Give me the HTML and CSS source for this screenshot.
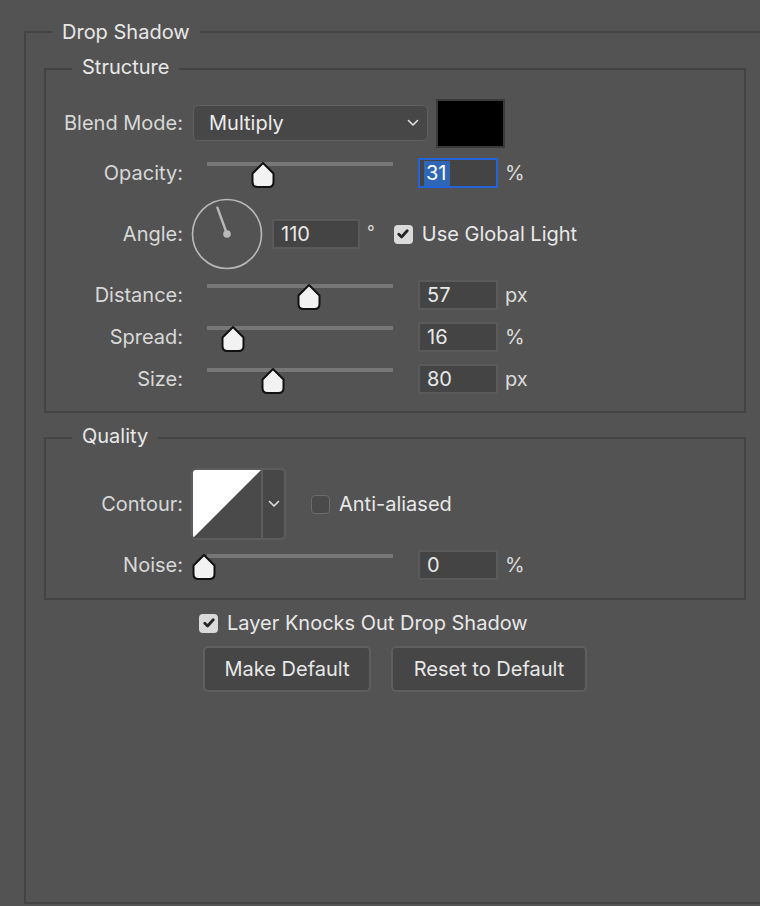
FILE: index.html
```html
<!DOCTYPE html>
<html>
<head>
<meta charset="utf-8">
<link rel="stylesheet" href="styles.css">
</head>
<body>
<fieldset class="outer">
  <legend class="lg-main">Drop Shadow</legend>

  <fieldset class="group structure">
    <legend class="lg-sub">Structure</legend>

    <div class="row row-blend">
      <span class="label">Blend Mode:</span>
      <div class="select">
        <span>Multiply</span>
        <svg class="chev" width="12" height="8" viewBox="0 0 12 8"><path d="M1.5 1.5 L6 6 L10.5 1.5" fill="none" stroke="#e0e0e0" stroke-width="1.6" stroke-linecap="round" stroke-linejoin="round"/></svg>
      </div>
      <div class="swatch"></div>
    </div>

    <div class="row row-slider r-opacity">
      <span class="label">Opacity:</span>
      <div class="slider">
        <div class="track"></div>
        <svg class="thumb" style="left:43px" width="26" height="28" viewBox="0 0 26 28"><path d="M13 2 L23.5 12.5 V21 Q23.5 26 18.5 26 H7.5 Q2.5 26 2.5 21 V12.5 Z" fill="#f2f2f2" stroke="#111" stroke-width="2" stroke-linejoin="round"/></svg>
      </div>
      <div class="num focus"><span class="sel">31</span></div>
      <span class="unit">%</span>
    </div>

    <div class="row row-angle">
      <span class="label">Angle:</span>
      <svg class="dial" width="72" height="72" viewBox="0 0 72 72">
        <circle cx="36" cy="36" r="34.5" fill="none" stroke="#b9b9b9" stroke-width="1.6"/>
        <line x1="36" y1="36" x2="26.4" y2="9.7" stroke="#b9b9b9" stroke-width="2.4" stroke-linecap="round"/>
        <circle cx="36" cy="36" r="3.8" fill="#b9b9b9"/>
      </svg>
      <div class="num num-angle">110</div>
      <span class="deg">°</span>
      <span class="check on"><svg width="12" height="10" viewBox="0 0 12 10"><path d="M1.8 5.2 L4.6 8 L10.2 1.8" fill="none" stroke="#262626" stroke-width="2.8" stroke-linecap="round" stroke-linejoin="round"/></svg></span>
      <span class="check-label">Use Global Light</span>
    </div>

    <div class="row row-slider r-distance">
      <span class="label">Distance:</span>
      <div class="slider">
        <div class="track"></div>
        <svg class="thumb" style="left:89px" width="26" height="28" viewBox="0 0 26 28"><path d="M13 2 L23.5 12.5 V21 Q23.5 26 18.5 26 H7.5 Q2.5 26 2.5 21 V12.5 Z" fill="#f2f2f2" stroke="#111" stroke-width="2" stroke-linejoin="round"/></svg>
      </div>
      <div class="num">57</div>
      <span class="unit">px</span>
    </div>

    <div class="row row-slider r-spread">
      <span class="label">Spread:</span>
      <div class="slider">
        <div class="track"></div>
        <svg class="thumb" style="left:13px" width="26" height="28" viewBox="0 0 26 28"><path d="M13 2 L23.5 12.5 V21 Q23.5 26 18.5 26 H7.5 Q2.5 26 2.5 21 V12.5 Z" fill="#f2f2f2" stroke="#111" stroke-width="2" stroke-linejoin="round"/></svg>
      </div>
      <div class="num">16</div>
      <span class="unit">%</span>
    </div>

    <div class="row row-slider r-size">
      <span class="label">Size:</span>
      <div class="slider">
        <div class="track"></div>
        <svg class="thumb" style="left:53px" width="26" height="28" viewBox="0 0 26 28"><path d="M13 2 L23.5 12.5 V21 Q23.5 26 18.5 26 H7.5 Q2.5 26 2.5 21 V12.5 Z" fill="#f2f2f2" stroke="#111" stroke-width="2" stroke-linejoin="round"/></svg>
      </div>
      <div class="num">80</div>
      <span class="unit">px</span>
    </div>
  </fieldset>

  <fieldset class="group quality">
    <legend class="lg-sub">Quality</legend>

    <div class="row row-contour">
      <span class="label">Contour:</span>
      <div class="contour">
        <svg class="curve" width="68" height="68" viewBox="0 0 68 68"><rect width="68" height="68" fill="#4a4a4a"/><path d="M0 0 H68 L0 68 Z" fill="#ffffff"/></svg>
        <div class="contour-drop">
          <svg width="12" height="8" viewBox="0 0 12 8"><path d="M1.5 1.5 L6 6 L10.5 1.5" fill="none" stroke="#e0e0e0" stroke-width="1.6" stroke-linecap="round" stroke-linejoin="round"/></svg>
        </div>
      </div>
      <span class="check off"></span>
      <span class="check-label">Anti-aliased</span>
    </div>

    <div class="row row-slider r-noise">
      <span class="label">Noise:</span>
      <div class="slider">
        <div class="track"></div>
        <svg class="thumb" style="left:-16px" width="26" height="28" viewBox="0 0 26 28"><path d="M13 2 L23.5 12.5 V21 Q23.5 26 18.5 26 H7.5 Q2.5 26 2.5 21 V12.5 Z" fill="#f2f2f2" stroke="#111" stroke-width="2" stroke-linejoin="round"/></svg>
      </div>
      <div class="num">0</div>
      <span class="unit">%</span>
    </div>
  </fieldset>

  <div class="row row-knock">
    <span class="check on"><svg width="12" height="10" viewBox="0 0 12 10"><path d="M1.8 5.2 L4.6 8 L10.2 1.8" fill="none" stroke="#262626" stroke-width="2.8" stroke-linecap="round" stroke-linejoin="round"/></svg></span>
    <span class="check-label">Layer Knocks Out Drop Shadow</span>
  </div>

  <div class="row row-buttons">
    <button class="btn btn-make">Make Default</button>
    <button class="btn btn-reset">Reset to Default</button>
  </div>
</fieldset>
</body>
</html>
```

FILE: styles.css
```css
html, body {
  margin: 0;
  padding: 0;
  background: #535353;
  overflow: hidden;
  height: 906px;
}

body {
  font-family: Inter, "Noto Sans", "Liberation Sans", sans-serif;
  font-size: 20px;
  line-height: 24px;
  color: #dedede;
}

fieldset {
  margin: 0;
  padding: 0;
  border: 2px solid #434343;
  min-width: 0;
}

legend {
  padding: 0 10px;
  line-height: 24px;
  color: #e8e8e8;
}

.outer {
  margin: 20px 0 0 24px;
  width: 800px;
  height: 884px;
  box-sizing: border-box;
}

.lg-main {
  margin-left: 26px;
  font-size: 20px;
}

.group {
  margin-left: 18px;
  width: 702px;
  box-sizing: border-box;
}

.lg-sub {
  margin-left: 26px;
  font-size: 20px;
  line-height: 21px;
  padding-bottom: 3px;
}

.structure {
  margin-top: 13px;
  padding: 17px 0 17px 0;
}

.quality {
  margin-top: 13px;
  padding: 18px 0 18px 0;
}

.row {
  display: flex;
  align-items: center;
}

.label {
  width: 137px;
  text-align: right;
  flex: none;
  color: #d8d8d8;
}

/* Blend mode row */
.row-blend {
  height: 50px;
}

.select {
  margin-left: 10px;
  width: 235px;
  height: 36px;
  box-sizing: border-box;
  border: 1px solid #606060;
  border-radius: 5px;
  background: #474747;
  display: flex;
  align-items: center;
  justify-content: space-between;
  padding: 0 8px 0 15px;
  color: #ececec;
}

.swatch {
  margin-left: 8px;
  width: 69px;
  height: 49px;
  box-sizing: border-box;
  background: #000;
  border: 2px solid #3a3a3a;
}

/* Slider rows */
.row-slider {
  height: 30px;
  margin-top: 12px;
}

.r-opacity { margin-top: 10px; }
.r-distance { margin-top: 10px; }

.slider {
  position: relative;
  margin-left: 24px;
  width: 186px;
  height: 30px;
  align-self: flex-start;
}

.track {
  margin-top: 4px;
  height: 4px;
  background: #777777;
}

.thumb {
  position: absolute;
  top: 3px;
}

.num {
  margin-left: 25px;
  width: 80px;
  height: 30px;
  box-sizing: border-box;
  border: 2px solid #5a5a5a;
  background: #444444;
  padding-left: 7px;
  display: flex;
  align-items: center;
  color: #e8e8e8;
}

.num.focus {
  border-color: #2563d8;
  padding-left: 4px;
}

.sel {
  background: #2f66b6;
  color: #ffffff;
  padding: 0 3px 0 2px;
  line-height: 25px;
}

.unit {
  margin-left: 7px;
  color: #dcdcdc;
}

/* Angle */
.row-angle {
  height: 72px;
  margin-top: 10px;
}

.dial {
  margin-left: 8px;
  flex: none;
}

.num-angle {
  margin-left: 9px;
  width: 88px;
}

.deg {
  margin-left: 7px;
  align-self: flex-start;
  margin-top: 22px;
  font-size: 17px;
  color: #d8d8d8;
}

.check {
  flex: none;
  width: 19px;
  height: 19px;
  box-sizing: border-box;
  border-radius: 4px;
  display: flex;
  align-items: center;
  justify-content: center;
}

.check.on {
  background: #dadada;
}

.check.off {
  background: #4a4a4a;
  border: 1.5px solid #6c6c6c;
}

.row-angle .check {
  margin-left: 19px;
}

.check-label {
  margin-left: 9px;
  color: #e8e8e8;
}

/* Contour */
.row-contour {
  height: 72px;
}

.contour {
  margin-left: 8px;
  width: 95px;
  height: 72px;
  box-sizing: border-box;
  border: 2px solid #5d5d5d;
  border-radius: 5px;
  overflow: hidden;
  display: flex;
  background: #474747;
}

.curve {
  flex: none;
  display: block;
}

.contour-drop {
  flex: 1;
  border-left: 2px solid #5d5d5d;
  display: flex;
  align-items: center;
  justify-content: center;
}

.row-contour .check {
  margin-left: 25px;
}

.r-noise {
  margin-top: 10px;
}

/* bottom */
.row-knock {
  margin-top: 13px;
  height: 20px;
  padding-left: 173px;
}

.row-buttons {
  margin-top: 13px;
  padding-left: 177px;
  gap: 20px;
}

.btn {
  height: 46px;
  box-sizing: border-box;
  border: 2px solid #5f5f5f;
  border-radius: 5px;
  background: #464646;
  color: #e8e8e8;
  font-family: inherit;
  font-size: 20px;
  padding: 0;
}

.btn-make { width: 168px; }
.btn-reset { width: 196px; }
```
